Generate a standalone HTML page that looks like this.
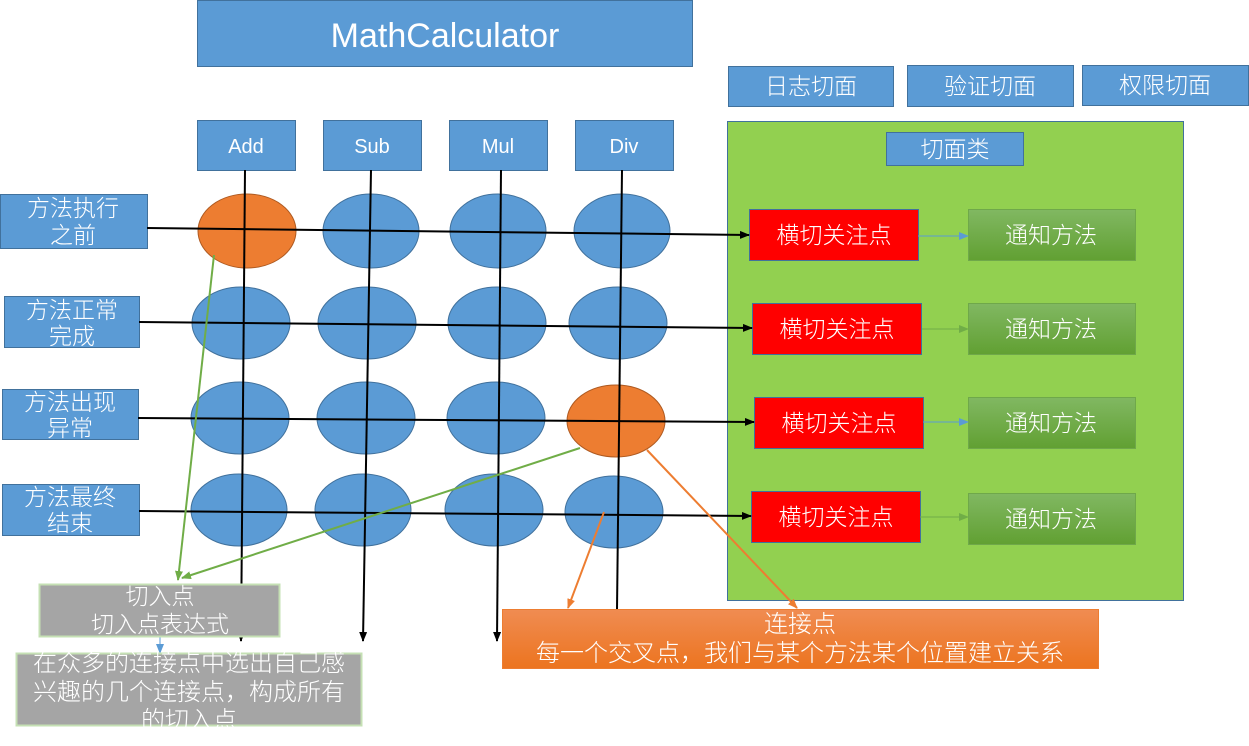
<!DOCTYPE html>
<html><head><meta charset="utf-8"><style>
html,body{margin:0;padding:0;background:#fff;width:1249px;height:746px;overflow:hidden}
svg text{font-family:"Liberation Sans","Noto Sans CJK SC",sans-serif;fill:#fff;text-anchor:middle}
.c{font-family:"Noto Sans CJK SC","WenQuanYi Zen Hei",sans-serif;font-weight:300}
</style></head><body>
<svg width="1249" height="746" viewBox="0 0 1249 746" xmlns="http://www.w3.org/2000/svg">
<defs>
<marker id="ak" markerWidth="10" markerHeight="8" refX="9" refY="4" orient="auto" markerUnits="userSpaceOnUse"><path d="M0,0 L10,4 L0,8z" fill="#000"/></marker>
<marker id="ag" markerWidth="10" markerHeight="8" refX="9" refY="4" orient="auto" markerUnits="userSpaceOnUse"><path d="M0,0 L10,4 L0,8z" fill="#70ad47"/></marker>
<marker id="ao" markerWidth="10" markerHeight="8" refX="9" refY="4" orient="auto" markerUnits="userSpaceOnUse"><path d="M0,0 L10,4 L0,8z" fill="#ed7d31"/></marker>
<marker id="ab" markerWidth="10" markerHeight="8" refX="9" refY="4" orient="auto" markerUnits="userSpaceOnUse"><path d="M0,0 L10,4 L0,8z" fill="#5b9bd5"/></marker>
<linearGradient id="gg" x1="0" y1="0" x2="0" y2="1"><stop offset="0" stop-color="#81b862"/><stop offset="1" stop-color="#61a032"/></linearGradient>
<linearGradient id="og" x1="0" y1="0" x2="0" y2="1"><stop offset="0" stop-color="#f08c52"/><stop offset="1" stop-color="#ec741f"/></linearGradient>
</defs>
<g stroke="#41719c" stroke-width="1">
<rect x="197.5" y="0.5" width="495" height="66" fill="#5b9bd5"/>
<rect x="728.5" y="66.5" width="165" height="40" fill="#5b9bd5"/>
<rect x="907.5" y="65.5" width="166" height="41" fill="#5b9bd5"/>
<rect x="1082.5" y="65.5" width="166" height="40" fill="#5b9bd5"/>
<rect x="197.5" y="120.5" width="98" height="50" fill="#5b9bd5"/>
<rect x="323.5" y="120.5" width="98" height="50" fill="#5b9bd5"/>
<rect x="449.5" y="120.5" width="98" height="50" fill="#5b9bd5"/>
<rect x="575.5" y="120.5" width="98" height="50" fill="#5b9bd5"/>
<rect x="727.5" y="121.5" width="456" height="479" fill="#92d050"/>
<rect x="886.5" y="132.5" width="137" height="33" fill="#5b9bd5"/>
<rect x="0.5" y="194.5" width="147" height="54" fill="#5b9bd5"/>
<rect x="4.5" y="296.5" width="135" height="51" fill="#5b9bd5"/>
<rect x="2.5" y="389.5" width="136" height="50" fill="#5b9bd5"/>
<rect x="2.5" y="484.5" width="137" height="51" fill="#5b9bd5"/>
<rect x="749.5" y="209.5" width="169" height="51" fill="#ff0000"/>
<rect x="752.5" y="303.5" width="169" height="51" fill="#ff0000"/>
<rect x="754.5" y="397.5" width="169" height="51" fill="#ff0000"/>
<rect x="751.5" y="491.5" width="169" height="51" fill="#ff0000"/>
</g>
<g stroke="#6fa84a" fill="url(#gg)">
<rect x="968.5" y="209.5" width="167" height="51"/>
<rect x="968.5" y="303.5" width="167" height="51"/>
<rect x="968.5" y="397.5" width="167" height="51"/>
<rect x="968.5" y="493.5" width="167" height="51"/>
</g>
<g fill="#5b9bd5" stroke="#41719c">
<ellipse cx="371" cy="231" rx="48" ry="37"/><ellipse cx="498" cy="231" rx="48" ry="37"/><ellipse cx="622" cy="231" rx="48" ry="37"/>
<ellipse cx="241" cy="323" rx="49" ry="36"/><ellipse cx="367" cy="323" rx="49" ry="36"/><ellipse cx="497" cy="323" rx="49" ry="36"/><ellipse cx="618" cy="323" rx="49" ry="36"/>
<ellipse cx="240" cy="418" rx="49" ry="36"/><ellipse cx="366" cy="418" rx="49" ry="36"/><ellipse cx="496" cy="418" rx="49" ry="36"/>
<ellipse cx="239" cy="510" rx="48" ry="36"/><ellipse cx="363" cy="510" rx="48" ry="36"/><ellipse cx="494" cy="510" rx="49" ry="36"/><ellipse cx="614" cy="512" rx="49" ry="36"/>
</g>
<g fill="#ed7d31" stroke="#ae5a21">
<ellipse cx="247" cy="231" rx="49" ry="37"/>
<ellipse cx="616" cy="421" rx="49" ry="36"/>
</g>
<g stroke="#000" stroke-width="2" fill="none">
<line x1="245" y1="170" x2="241" y2="641" marker-end="url(#ak)"/>
<line x1="371" y1="170" x2="363" y2="641" marker-end="url(#ak)"/>
<line x1="501" y1="170" x2="497" y2="641" marker-end="url(#ak)"/>
<line x1="622" y1="170" x2="617" y2="610"/>
<line x1="147" y1="228" x2="749" y2="235" marker-end="url(#ak)"/>
<line x1="139" y1="322" x2="752" y2="328" marker-end="url(#ak)"/>
<line x1="138" y1="418" x2="754" y2="422" marker-end="url(#ak)"/>
<line x1="139" y1="511" x2="751" y2="516" marker-end="url(#ak)"/>
</g>
<g stroke="#70ad47" stroke-width="2" fill="none">
<line x1="214" y1="255" x2="178" y2="580" marker-end="url(#ag)"/>
<line x1="580" y1="448" x2="182" y2="578" marker-end="url(#ag)"/>
<line x1="922" y1="329" x2="968" y2="329" stroke-width="1" marker-end="url(#ag)"/>
<line x1="920" y1="517" x2="968" y2="517" stroke-width="1" marker-end="url(#ag)"/>
</g>
<g stroke="#5b9bd5" fill="none">
<line x1="918" y1="236" x2="968" y2="236" marker-end="url(#ab)"/>
<line x1="923" y1="422" x2="968" y2="422" marker-end="url(#ab)"/>
<line x1="160" y1="636" x2="160" y2="653" marker-end="url(#ab)"/>
</g>
<g stroke="#ed7d31" stroke-width="2" fill="none">
<line x1="647" y1="450" x2="797" y2="608" marker-end="url(#ao)"/>
<line x1="604" y1="512" x2="568" y2="608" marker-end="url(#ao)"/>
</g>
<rect x="39.5" y="584.5" width="240" height="52" fill="#a5a5a5" stroke="#c5e0b4" stroke-width="2"/>
<rect x="16.5" y="653.5" width="345" height="72" fill="#a5a5a5" stroke="#c5e0b4" stroke-width="2"/>
<rect x="502.5" y="609.5" width="596" height="59" fill="url(#og)" stroke="#ed7d31"/>
<text x="445" y="47" font-size="34">MathCalculator</text>
<g font-size="23" class="c">
<text x="811" y="94">日志切面</text><text x="990" y="94">验证切面</text><text x="1165" y="93">权限切面</text>
<text x="955" y="157">切面类</text>
<text x="73" y="216">方法执行</text><text x="73" y="243">之前</text>
<text x="72" y="318">方法正常</text><text x="72" y="344">完成</text>
<text x="70" y="410">方法出现</text><text x="70" y="436">异常</text>
<text x="70" y="505">方法最终</text><text x="70" y="531">结束</text>
<text x="834" y="243">横切关注点</text><text x="837" y="337">横切关注点</text><text x="839" y="431">横切关注点</text><text x="836" y="525">横切关注点</text>
<text x="1051" y="243">通知方法</text><text x="1051" y="337">通知方法</text><text x="1051" y="431">通知方法</text><text x="1051" y="527">通知方法</text>
<text x="160" y="604">切入点</text><text x="160" y="632">切入点表达式</text>
</g>
<g font-size="24" class="c">
<text x="189" y="671">在众多的连接点中选出自己感</text><text x="189" y="700">兴趣的几个连接点，构成所有</text><text x="189" y="728">的切入点</text>
<text x="800" y="632">连接点</text><text x="800" y="661">每一个交叉点，我们与某个方法某个位置建立关系</text>
</g>
<g font-size="20">
<text x="246" y="153">Add</text><text x="372" y="153">Sub</text><text x="498" y="153">Mul</text><text x="624" y="153">Div</text>
</g>
</svg>
</body></html>
